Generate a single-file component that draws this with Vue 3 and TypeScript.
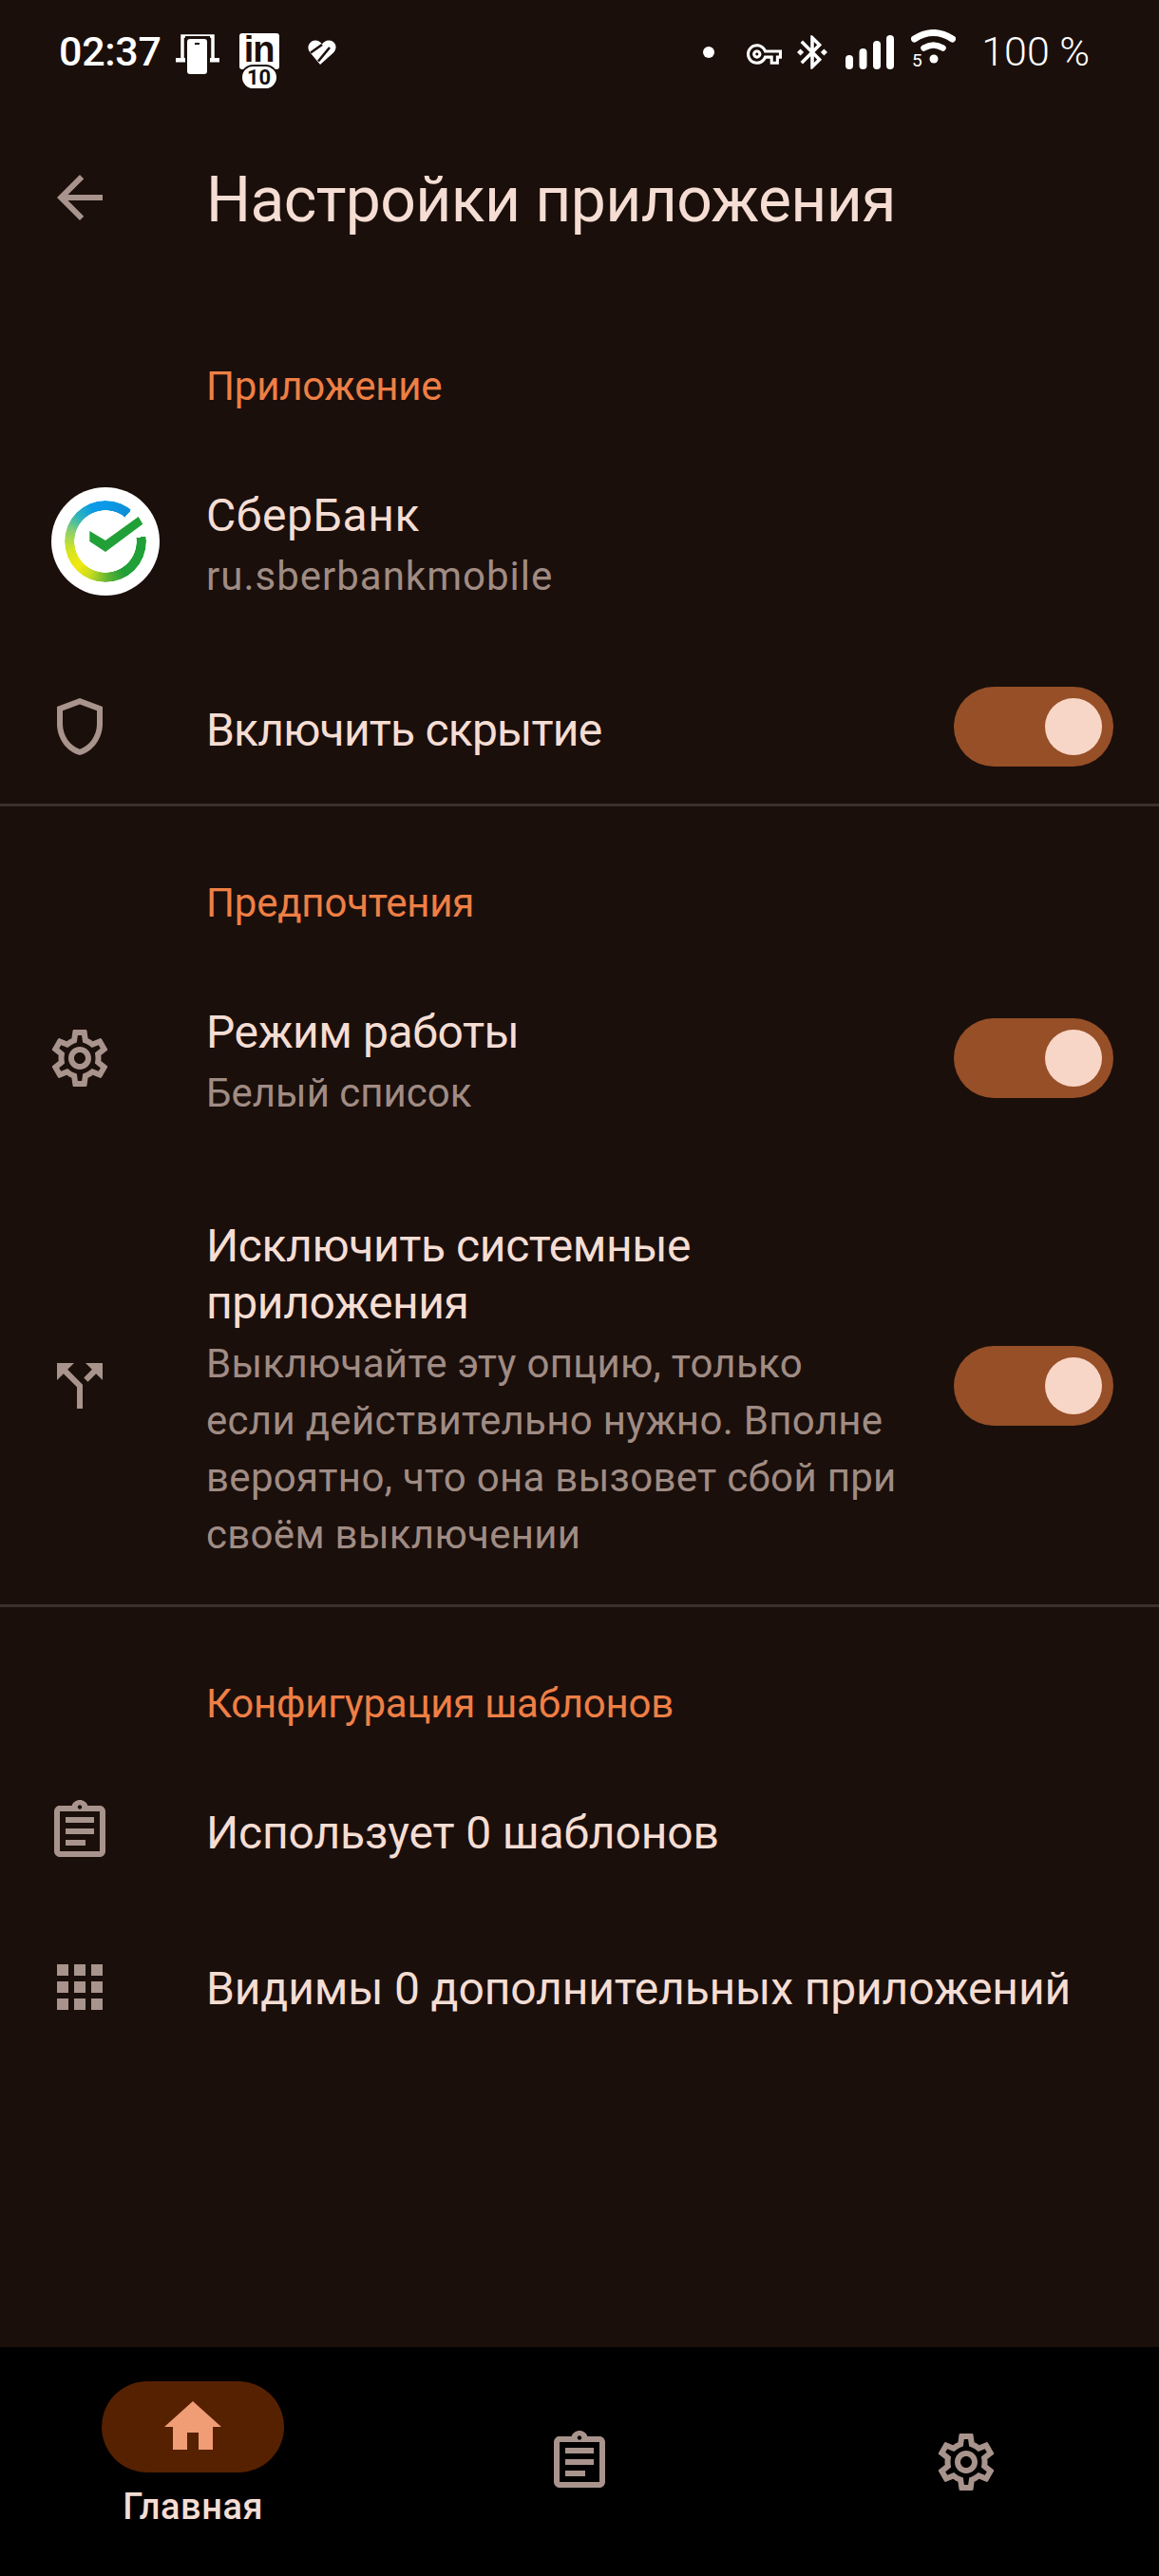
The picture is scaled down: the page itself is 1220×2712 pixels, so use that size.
<script setup lang="ts">
const icons = {
  back: 'M20 11H7.83l5.59-5.59L12 4l-8 8 8 8 1.41-1.41L7.83 13H20v-2z',
  shield: 'M12 2L4 5v6.09c0 5.05 3.41 9.76 8 10.91 4.59-1.15 8-5.86 8-10.91V5l-8-3zm6 9.09c0 4-2.55 7.7-6 8.83-3.45-1.13-6-4.82-6-8.83v-4.7l6-2.25 6 2.25v4.7z',
  gear: 'M19.43 12.98c.04-.32.07-.64.07-.98 0-.34-.03-.66-.07-.98l2.11-1.65c.19-.15.24-.42.12-.64l-2-3.46c-.09-.16-.26-.25-.44-.25-.06 0-.12.01-.17.03l-2.49 1c-.52-.4-1.08-.73-1.69-.98l-.38-2.65C14.46 2.18 14.25 2 14 2h-4c-.25 0-.46.18-.49.42l-.38 2.65c-.61.25-1.17.59-1.69.98l-2.49-1c-.06-.02-.12-.03-.18-.03-.17 0-.34.09-.43.25l-2 3.46c-.13.22-.07.49.12.64l2.11 1.65c-.04.32-.07.65-.07.98 0 .33.03.66.07.98l-2.11 1.65c-.19.15-.24.42-.12.64l2 3.46c.09.16.26.25.44.25.06 0 .12-.01.17-.03l2.49-1c.52.4 1.08.73 1.69.98l.38 2.65c.03.24.24.42.49.42h4c.25 0 .46-.18.49-.42l.38-2.65c.61-.25 1.17-.59 1.69-.98l2.49 1c.06.02.12.03.18.03.17 0 .34-.09.43-.25l2-3.46c.12-.22.07-.49-.12-.64l-2.11-1.65zm-1.98-1.71c.04.31.05.52.05.73 0 .21-.02.43-.05.73l-.14 1.13.89.7 1.08.84-.7 1.21-1.27-.51-1.04-.42-.9.68c-.43.32-.84.56-1.25.73l-1.06.43-.16 1.13-.2 1.35h-1.4l-.19-1.35-.16-1.13-1.06-.43c-.43-.18-.83-.41-1.23-.71l-.91-.7-1.06.43-1.27.51-.7-1.21 1.08-.84.89-.7-.14-1.13c-.03-.31-.05-.54-.05-.74s.02-.43.05-.73l.14-1.13-.89-.7-1.08-.84.7-1.21 1.27.51 1.04.42.9-.68c.43-.32.84-.56 1.25-.73l1.06-.43.16-1.13.2-1.35h1.39l.19 1.35.16 1.13 1.06.43c.43.18.83.41 1.23.71l.91.7 1.06-.43 1.27-.51.7 1.21-1.07.85-.89.7.14 1.13zM12 8c-2.21 0-4 1.79-4 4s1.79 4 4 4 4-1.79 4-4-1.79-4-4-4zm0 6c-1.1 0-2-.9-2-2s.9-2 2-2 2 .9 2 2-.9 2-2 2z',
  split: 'M14 4l2.29 2.29-2.88 2.88 1.42 1.42 2.88-2.88L20 10V4h-6zm-4 0H4v6l2.29-2.29 4.71 4.7V20h2v-8.41l-5.29-5.3L10 4z',
  clipboard: 'M7 15h7v2H7zm0-4h10v2H7zm0-4h10v2H7zm12-4h-4.18C14.4 1.84 13.3 1 12 1c-1.3 0-2.4.84-2.82 2H5c-.14 0-.27.01-.4.04-.39.08-.74.28-1.01.55-.18.18-.33.4-.43.64-.1.23-.16.49-.16.77v14c0 .27.06.54.16.78s.25.45.43.64c.27.27.62.47 1.01.55.13.02.26.03.4.03h14c1.1 0 2-.9 2-2V5c0-1.1-.9-2-2-2zm-7-.25c.41 0 .75.34.75.75s-.34.75-.75.75-.75-.34-.75-.75.34-.75.75-.75zM19 19H5V5h14v14z',
  apps: 'M4 8h4V4H4v4zm6 12h4v-4h-4v4zm-6 0h4v-4H4v4zm0-6h4v-4H4v4zm6 0h4v-4h-4v4zm6-10v4h4V4h-4zm-6 4h4V4h-4v4zm6 6h4v-4h-4v4zm0 6h4v-4h-4v4z',
  home: 'M10 20v-6h4v6h5v-8h3L12 3 2 12h3v8z',
  key: 'M22 19h-6v-4h-2.68c-1.14 2.42-3.6 4-6.32 4-3.86 0-7-3.14-7-7s3.14-7 7-7c2.72 0 5.17 1.58 6.32 4H24v6h-2v4zm-4-2h2v-4h2v-2H11.94l-.23-.67C11.01 8.34 9.11 7 7 7c-2.76 0-5 2.24-5 5s2.24 5 5 5c2.11 0 4.01-1.34 4.71-3.33l.23-.67H18v4zM7 15c-1.65 0-3-1.35-3-3s1.35-3 3-3 3 1.35 3 3-1.35 3-3 3zm0-4c-.55 0-1 .45-1 1s.45 1 1 1 1-.45 1-1-.45-1-1-1z',
  bluetooth: 'M7 12l-2-2-2 2 2 2 2-2zm10.71-4.29L12 2h-1v7.59L6.41 5 5 6.41 10.59 12 5 17.59 6.41 19 11 14.41V22h1l5.71-5.71-4.3-4.29 4.3-4.29zM13 5.83l1.88 1.88L13 9.59V5.83zm1.88 10.46L13 18.17v-3.76l1.88 1.88zM19 10l-2 2 2 2 2-2-2-2z',
}
</script>

<template>
  <div class="page">
    <header class="status">
      <span class="time">02:37</span>
      <svg class="st-device" width="46" height="42" viewBox="0 0 46 42">
        <path d="M7 26V2h32v24" fill="none" stroke="#fff" stroke-width="3.5" />
        <rect x="0" y="25" width="10" height="4.5" fill="#fff" />
        <rect x="35" y="25" width="11" height="4.5" fill="#fff" />
        <rect x="10" y="2" width="26" height="40" fill="#1a0f0b" />
        <rect x="12" y="5" width="21" height="37" rx="3" fill="#fff" />
        <rect x="20" y="9" width="5" height="2" fill="#1a0f0b" />
      </svg>
      <div class="st-linkedin">
        <span class="li-text">in</span>
        <span class="li-badge">10</span>
      </div>
      <svg class="st-heart" width="30" height="26" viewBox="0 0 30 26">
        <path d="M15 4.5C12 0 6-1 2.500 3-1 7 .5 11 3 14l10 12 14-12.500C31 9 30 4 26 1.500 22-1 17 1 15 4.500Z" fill="#fff" />
        <path d="M3 13.500 15 5M11 22.500 23 8" stroke="#1a0f0b" stroke-width="2.600" fill="none" />
      </svg>
      <div class="status-right">
        <span class="st-dot"></span>
        <svg class="st-key" width="37" height="22" viewBox="0 5 24 14"><path :d="icons.key" fill="#fff" /></svg>
        <svg class="st-bt" width="32" height="36" viewBox="3 2 18 20"><path :d="icons.bluetooth" fill="#fff" /></svg>
        <svg class="st-signal" width="51" height="36" viewBox="0 0 51 36">
          <rect x="0" y="21" width="8" height="15" rx="4" fill="#fff" />
          <rect x="14.500" y="14" width="8" height="22" rx="4" fill="#fff" />
          <rect x="29" y="6" width="8" height="30" rx="4" fill="#fff" />
          <rect x="43" y="0" width="8" height="36" rx="4" fill="#fff" />
        </svg>
        <svg class="st-wifi" width="47" height="46" viewBox="0 0 47 46">
          <path d="M3.500 10Q23.500-3 43.500 10" fill="none" stroke="#fff" stroke-width="7" stroke-linecap="round" />
          <path d="M13.500 19.500Q23.500 13.500 33.500 19.500" fill="none" stroke="#fff" stroke-width="6.500" stroke-linecap="round" />
          <circle cx="24" cy="31" r="4.500" fill="#fff" />
          <text x="1" y="39" class="wifi-5">5</text>
        </svg>
        <span class="battery">100 %</span>
      </div>
    </header>

    <main class="content">
      <div class="toolbar">
        <svg class="icon" viewBox="0 0 24 24"><path :d="icons.back" /></svg>
        <h1 class="page-title">Настройки приложения</h1>
      </div>

      <section class="group">
        <h2 class="group-title">Приложение</h2>
        <div class="row row-two">
          <div class="lead">
            <div class="app-icon">
              <div class="sber-ring"></div>
              <svg class="sber-check" width="114" height="114" viewBox="0 0 114 114">
                <path d="M40.300 46 57 56 91.700 31 96.300 38.700 57 68 40.300 57Z" fill="#21a038" />
              </svg>
            </div>
          </div>
          <div class="text">
            <div class="title app-name">СберБанк</div>
            <div class="summary pkg">ru.sberbankmobile</div>
          </div>
        </div>
        <div class="row row-shield">
          <div class="lead"><svg class="icon" viewBox="0 0 24 24"><path :d="icons.shield" /></svg></div>
          <div class="text"><div class="title">Включить скрытие</div></div>
          <div class="switch"><span class="thumb"></span></div>
        </div>
      </section>

      <section class="group">
        <h2 class="group-title">Предпочтения</h2>
        <div class="row row-two">
          <div class="lead"><svg class="icon" viewBox="0 0 24 24"><path :d="icons.gear" /></svg></div>
          <div class="text">
            <div class="title">Режим работы</div>
            <div class="summary">Белый список</div>
          </div>
          <div class="switch"><span class="thumb"></span></div>
        </div>
        <div class="row row-tall">
          <div class="lead"><svg class="icon" viewBox="0 0 24 24"><path :d="icons.split" /></svg></div>
          <div class="text">
            <div class="title">Исключить системные приложения</div>
            <div class="summary">Выключайте эту опцию, только<br />если действительно нужно. Вполне<br />вероятно, что она вызовет сбой при<br />своём выключении</div>
          </div>
          <div class="switch"><span class="thumb"></span></div>
        </div>
      </section>

      <section class="group last">
        <h2 class="group-title">Конфигурация шаблонов</h2>
        <div class="row row-one">
          <div class="lead"><svg class="icon" viewBox="0 0 24 24"><path :d="icons.clipboard" /></svg></div>
          <div class="text"><div class="title">Использует 0 шаблонов</div></div>
        </div>
        <div class="row row-one">
          <div class="lead"><svg class="icon" viewBox="0 0 24 24"><path :d="icons.apps" /></svg></div>
          <div class="text"><div class="title">Видимы 0 дополнительных приложений</div></div>
        </div>
      </section>
    </main>

    <nav class="bottom-nav">
      <div class="nav-item active">
        <div class="pill"><svg class="icon" viewBox="0 0 24 24"><path :d="icons.home" /></svg></div>
        <span class="nav-label">Главная</span>
      </div>
      <div class="nav-item"><svg class="icon" viewBox="0 0 24 24"><path :d="icons.clipboard" /></svg></div>
      <div class="nav-item"><svg class="icon" viewBox="0 0 24 24"><path :d="icons.gear" /></svg></div>
    </nav>
  </div>
</template>

<style>
html, body { margin: 0; background: #1a0f0b; }
</style>

<style scoped>
.page {
  width: 1220px; height: 2712px; display: flex; flex-direction: column;
  background: #1a0f0b; color: #f5ddd3; overflow: hidden;
  font-family: Roboto, "Noto Sans", sans-serif;
}

.status { height: 110px; flex: none; display: flex; align-items: center; padding: 0 73px 0 62px; color: #fff; }
.time { font-size: 43px; font-weight: 500; margin-top: -3px; line-height: 50px; letter-spacing: -0.3px; }
.st-device { margin-left: 15px; margin-top: 4px; }
.st-linkedin { position: relative; width: 42px; height: 38px; margin-left: 21px; margin-top: -3px; background: #fff; border-radius: 3px; color: #1a0f0b; }
.li-text { display: block; font: 700 38px/34px "Liberation Sans", sans-serif; text-align: center; letter-spacing: -1px; }
.li-badge {
  position: absolute; left: 3px; top: 35px; width: 36px; height: 23px;
  background: #fff; border: 2px solid #1a0f0b; border-radius: 14px; margin: -2px;
  color: #111; font: 700 22px/24px Roboto, sans-serif; text-align: center;
}
.st-heart { margin-left: 30px; }
.status-right { margin-left: auto; display: flex; align-items: center; }
.st-dot { width: 12px; height: 12px; border-radius: 50%; background: #fff; }
.st-key { margin-left: 34px; margin-top: 3px; }
.st-bt { margin-left: 16px; }
.st-signal { margin-left: 19px; }
.st-wifi { margin-left: 18px; margin-top: -3px; }
.wifi-5 { font-size: 19px; fill: #fff; }
.battery { margin-left: 27px; font-size: 43px; font-weight: 300; margin-top: -3px; line-height: 50px; }

.icon { width: 72px; height: 72px; display: block; fill: #a8948c; flex: none; }

.toolbar { height: 195px; display: flex; align-items: center; padding-left: 48px; }
.toolbar .icon { margin-right: 97px; }
.page-title { margin: 6px 0 0; font-size: 66px; font-weight: 400; line-height: 84px; color: #f5ddd3; letter-spacing: -0.6px; }

.group { border-bottom: 3px solid #3a302c; }
.group.last { border-bottom: none; }
.group-title { margin: 0; padding: 72px 0 19px 217px; font-size: 42px; line-height: 60px; font-weight: 400; color: #ee7f45; letter-spacing: -0.2px; }
.group.last .group-title { padding-bottom: 22px; }

.row { display: flex; align-items: center; padding: 0 48px; box-sizing: border-box; }
.row-two { height: 228px; }
.row-tall { height: 461px; }
.row-one { height: 164px; }
.row-shield { height: 162px; }
.lead { width: 169px; flex: none; }
.text { flex: 1; min-width: 0; padding-top: 10px; }
.row-shield .text { padding-top: 8px; }
.row-one .text { padding-top: 4px; }
.title { font-size: 48px; line-height: 60px; color: #f5ddd3; letter-spacing: -0.4px; }
.row-shield .title { letter-spacing: -0.8px; }
.row-one .title { letter-spacing: -0.15px; }
.summary { margin-top: 4px; font-size: 42px; line-height: 60px; color: #a08c84; }
.row-tall .summary { letter-spacing: 0.3px; }
.app-name { letter-spacing: 0.6px; }
.pkg { letter-spacing: 1px; }

.switch { position: relative; width: 168px; height: 84px; flex: none; margin-left: 48px; border-radius: 42px; background: #964f27; }
.thumb { position: absolute; left: 96px; top: 12px; width: 60px; height: 60px; border-radius: 50%; background: #f8d6c7; }

.app-icon { position: relative; width: 114px; height: 114px; margin-left: 6px; border-radius: 50%; background: #fff; }
.sber-ring {
  position: absolute; left: 14px; top: 14px; width: 86px; height: 86px; border-radius: 50%;
  background: conic-gradient(#0a9ae8 0deg, #0e8fd6 39deg, transparent 39deg, transparent 83deg, #21a038 83deg, #21a038 150deg, #5cb233 175deg, #c8dc22 205deg, #f2e80f 228deg, #d6e51e 255deg, #8fd06a 285deg, #2fb5b8 312deg, #0a9ae8 340deg, #0a9ae8 360deg);
  -webkit-mask: radial-gradient(circle, transparent 32.5px, #000 33px);
  mask: radial-gradient(circle, transparent 32.5px, #000 33px);
}
.sber-check { position: absolute; left: 0; top: 0; }

.content { flex: 1; min-height: 0; }

.bottom-nav { height: 241px; flex: none; background: #000; display: flex; }
.nav-item { flex: 1; display: flex; flex-direction: column; align-items: center; justify-content: center; }
.nav-item.active { justify-content: flex-start; padding-top: 36px; }
.pill { width: 192px; height: 96px; border-radius: 48px; background: #562100; display: flex; align-items: center; justify-content: center; }
.pill .icon { fill: #f09c75; }
.nav-label { margin-top: 12px; font-size: 38px; line-height: 48px; font-weight: 500; letter-spacing: 0.6px; color: #f5ddd3; }
</style>
